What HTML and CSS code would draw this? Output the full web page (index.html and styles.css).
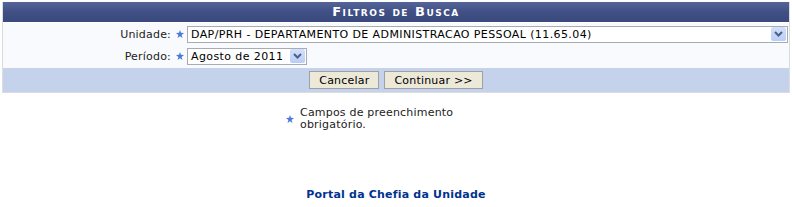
FILE: index.html
```html
<!DOCTYPE html>
<html lang="pt-BR">
<head>
    <meta charset="utf-8">
    <title>Portal da Chefia da Unidade</title>
    <link rel="stylesheet" href="styles.css">
</head>
<body>
    <div class="filtros">
        <div class="caption">Filtros de Busca</div>
        <div class="linha">
            <span class="rotulo">Unidade:</span>
            <svg class="req" viewBox="0 0 8 8"><path d="M4 0 L5 2.8 L8 3 L5.6 4.9 L6.5 8 L4 6.2 L1.5 8 L2.4 4.9 L0 3 L3 2.8 Z"/></svg>
            <div class="combo longo">
                <span class="valor">DAP/PRH - DEPARTAMENTO DE ADMINISTRACAO PESSOAL (11.65.04)</span>
                <span class="seta"><svg viewBox="0 0 9 6"><path d="M1 1 L4.5 4.5 L8 1"/></svg></span>
            </div>
        </div>
        <div class="linha">
            <span class="rotulo">Período:</span>
            <svg class="req" viewBox="0 0 8 8"><path d="M4 0 L5 2.8 L8 3 L5.6 4.9 L6.5 8 L4 6.2 L1.5 8 L2.4 4.9 L0 3 L3 2.8 Z"/></svg>
            <div class="combo curto">
                <span class="valor">Agosto de 2011</span>
                <span class="seta"><svg viewBox="0 0 9 6"><path d="M1 1 L4.5 4.5 L8 1"/></svg></span>
            </div>
        </div>
        <div class="rodape">
            <button class="botao">Cancelar</button>
            <button class="botao">Continuar &gt;&gt;</button>
        </div>
    </div>

    <div class="obrigatorio">
        <svg class="req" viewBox="0 0 8 8"><path d="M4 0 L5 2.8 L8 3 L5.6 4.9 L6.5 8 L4 6.2 L1.5 8 L2.4 4.9 L0 3 L3 2.8 Z"/></svg>
        <span>Campos de preenchimento<br>obrigatório.</span>
    </div>

    <div class="voltar">Portal da Chefia da Unidade</div>
</body>
</html>
```

FILE: styles.css
```css
body {
    margin: 0;
    padding: 2px;
    font-family: "DejaVu Sans", Verdana, sans-serif;
    font-size: 11px;
    letter-spacing: 0.2px;
    color: #222;
    background: #fff;
}
.filtros {
    width: 786px;
    border: 1px solid #dcdcdc;
    border-top: none;
    background: #f9fafd;
}
.caption {
    height: 20px;
    line-height: 20px;
    text-align: center;
    color: #fff;
    font-weight: bold;
    font-variant: small-caps;
    font-size: 13px;
    letter-spacing: 1.5px;
    background: linear-gradient(#55659a, #404f84 50%, #3b4a7d);
    border-bottom: 1px solid #fff;
}
.linha {
    display: flex;
    align-items: center;
    height: 22px;
}
.linha:first-of-type {
    margin-top: 3px;
}
.rotulo {
    width: 168px;
    text-align: right;
}
.req {
    width: 8px;
    height: 8px;
    margin: 0 3px 0 5px;
    fill: #4a7cd6;
}
.combo {
    display: flex;
    align-items: center;
    height: 15px;
    border: 1px solid #a5acb2;
    background: #fff;
    box-shadow: inset 0 0 0 1px #fff;
}
.combo.longo {
    width: 599px;
}
.combo.curto {
    width: 118px;
}
.valor {
    flex: 1;
    padding-left: 3px;
    font-size: 11px;
    letter-spacing: 0.4px;
    white-space: nowrap;
    color: #000;
}
.seta {
    width: 15px;
    height: 14px;
    margin-right: 1px;
    display: flex;
    align-items: center;
    justify-content: center;
    background: linear-gradient(#d4e0fb, #b9cdf7);
    border-radius: 2px;
}
.seta svg {
    width: 9px;
    height: 6px;
    fill: none;
    stroke: #4d6185;
    stroke-width: 2;
}
.rodape {
    margin-top: 1px;
    height: 24px;
    display: flex;
    justify-content: center;
    align-items: center;
    gap: 5px;
    background: #c4d2eb;
}
.botao {
    height: 18px;
    padding: 0 9px;
    font-family: "DejaVu Sans", Verdana, sans-serif;
    font-size: 11px;
    letter-spacing: 0.2px;
    color: #000;
    background: #ece9d8;
    border: 1px solid #a0a0a0;
    border-radius: 0;
}
.obrigatorio {
    display: flex;
    align-items: center;
    margin: 14px 0 0 284px;
    line-height: 12px;
}
.obrigatorio .req {
    margin: 0 6px 0 0;
}
.voltar {
    margin-top: 57px;
    text-align: center;
    font-weight: bold;
    font-size: 11px;
    color: #003390;
    width: 788px;
}
```
